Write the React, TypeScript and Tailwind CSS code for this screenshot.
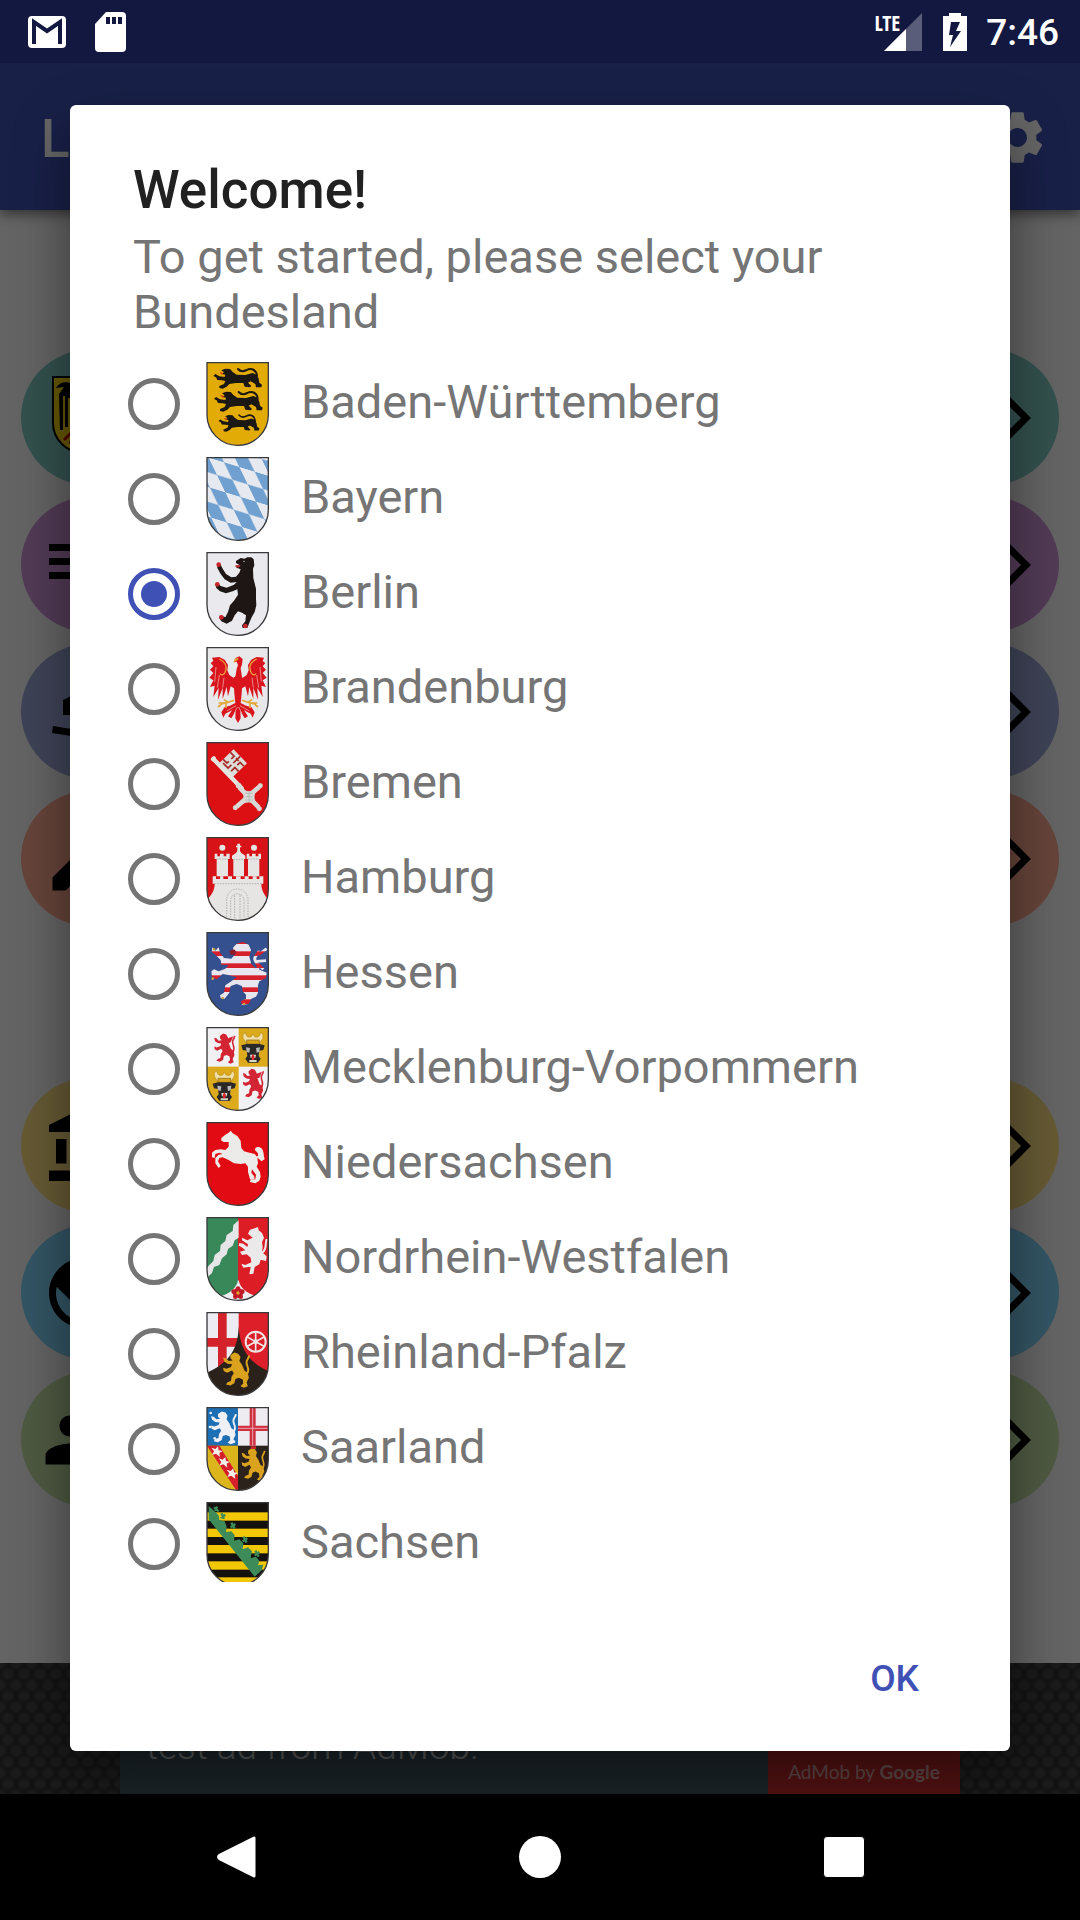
import React, { useState } from "react";
import type { ReactNode } from "react";
import { MdAccountBalance, MdEdit, MdPeople, MdPublic, MdSettings } from "react-icons/md";

const SHIELD = "M3 2H187V158A92 92 0 0 1 3 158Z";

const RAMPANT =
  "M30 12L44 2L58 6L66 18L62 32L72 46L80 66L92 74L96 92L88 108L92 122L78 128L66 122L76 112L74 98L60 92L48 96L44 112L30 120L14 116L20 108L32 104L34 88L42 76L36 66L18 74L6 68L4 56L16 60L32 54L36 44L20 42L8 34L4 20L14 22L24 32L38 30L30 22Z";
const RAMPANT_TAIL = "M88 80C104 60 84 50 88 34C90 26 96 22 97 12";

const STRIDING =
  "M46 25L58 20L72 21L80 30L92 38L118 39L140 33L152 38L158 50L160 62L168 68L166 76L150 76L148 66L134 58L126 62L136 72L132 76L116 74L112 63L90 63L70 66L62 74L50 80L40 78L40 72L54 66L58 57L48 55L34 54L30 46L22 42L28 36L40 43L56 45L58 38L48 36L54 31Z";

function Shield({ id, field, children }: { id: string; field: string; children?: ReactNode }) {
  return (
    <svg viewBox="0 0 189 252" className="h-[84px] w-[63px] shrink-0" aria-hidden="true">
      <clipPath id={id}>
        <path d={SHIELD} />
      </clipPath>
      <g clipPath={`url(#${id})`}>
        <rect width="189" height="252" fill={field} />
        {children}
      </g>
      <path d={SHIELD} fill="none" stroke="#3a3a3c" strokeWidth="4" />
    </svg>
  );
}

function Rampant({ color, place }: { color: string; place: string }) {
  return (
    <g transform={place}>
      <path d={RAMPANT} fill={color} />
      <path d={RAMPANT_TAIL} fill="none" stroke={color} strokeWidth="7" />
    </g>
  );
}

function BadenWuerttemberg() {
  return (
    <Shield id="bw" field="#e3ab05">
      {["translate(0 0)", "translate(2 69)", "translate(19 142) scale(.84)"].map((t) => (
        <g key={t} transform={t}>
          <path d={STRIDING} fill="#1b1712" />
          <path
            d="M153 42C152 24 136 16 122 24C112 29 102 28 96 21"
            fill="none"
            stroke="#1b1712"
            strokeWidth="6"
            strokeLinecap="round"
          />
          <path d="M40 31L52 33L48 38Z" fill="#d8301a" />
        </g>
      ))}
    </Shield>
  );
}

function Bayern() {
  return (
    <Shield id="by" field="#e6e9ef">
      <defs>
        <pattern
          id="by-lozenges"
          width="2"
          height="2"
          patternUnits="userSpaceOnUse"
          patternTransform="matrix(46 14 25 52 8 2)"
        >
          <rect x="1" width="1" height="1" fill="#6fa0cf" />
          <rect y="1" width="1" height="1" fill="#6fa0cf" />
        </pattern>
      </defs>
      <rect width="189" height="252" fill="url(#by-lozenges)" />
    </Shield>
  );
}

function Berlin() {
  return (
    <Shield id="be" field="#e9e9ee">
      <path
        d="M90 27L104 18L116 20L124 16L136 16L143 22L145 40L141 50L142 78L150 110L150 140L151 160L146 180L137 196L130 212L124 228L110 228L108 220L118 208L120 190L108 182L96 178L86 190L78 206L62 215L46 208L40 198L44 190L58 196L66 180L72 160L84 146L96 128L94 112L80 118L60 124L42 118L31 108L28 98L34 92L44 102L62 107L84 98L92 90L74 92L56 82L44 66L34 48L34 38L42 34L50 50L60 66L76 76L90 74L100 62L104 52L92 47L88 42L102 40L90 33Z"
        fill="#1e1614"
      />
      <g fill="#c8252b">
        <circle cx="38" cy="38" r="7" />
        <circle cx="34" cy="97" r="7" />
        <circle cx="46" cy="196" r="7" />
        <circle cx="118" cy="222" r="7" />
        <path d="M88 40L104 40L98 47L90 45Z" />
      </g>
      <circle cx="114" cy="28" r="2" fill="#e9e9ee" />
    </Shield>
  );
}

const HALF_EAGLE =
  "M96 84L82 92L70 84L64 70L66 54L56 38L40 30L18 32L22 42L14 48L22 58L12 68L22 78L10 92L22 100L12 120L26 116L22 150L38 122L36 158L50 122L50 156L62 120L66 148L74 118L84 124L86 150L88 168L72 176L56 180L46 196L52 212L58 200L78 190L66 208L76 214L89 192L88 214L96 228Z";

function Brandenburg() {
  return (
    <Shield id="bb" field="#e8e7ea">
      {["", "translate(192 0) scale(-1 1)"].map((t) => (
        <g key={t} transform={t}>
          <path d={HALF_EAGLE} fill="#d9141c" />
          <path d="M40 36C56 44 64 58 58 74C55 84 46 86 42 80" fill="none" stroke="#e9a23a" strokeWidth="4" />
          <path
            d="M84 160L66 166L54 158M66 166L48 170L36 180M60 168L60 184M54 168L38 168"
            fill="none"
            stroke="#e3a534"
            strokeWidth="5"
          />
          <path d="M30 60L26 104M40 84L34 122M54 92L50 122" stroke="#f0c3bd" strokeWidth="2" />
          <path d="M90 176L62 192M94 180L84 200" stroke="#f0c3bd" strokeWidth="2" />
        </g>
      ))}
      <path d="M84 46L88 34L100 28L110 36L108 52L104 64L108 90H88L92 66L96 54L92 44Z" fill="#d9141c" />
      <path d="M82 48L86 36L98 32L96 38L90 42Z" fill="#e3a534" />
    </Shield>
  );
}

function Bremen() {
  return (
    <Shield id="hb" field="#dc0f12">
      <g transform="translate(22 50) rotate(46)">
        <rect x="22" y="-63" width="58" height="60" fill="#dcdcd8" />
        <path
          d="M22 -50H38V-38M22 -20H38V-28M51 -63V-34M80 -50H64V-38M64 -12V-28H80M30 -12H51V-26M46 -50H58"
          fill="none"
          stroke="#a82824"
          strokeWidth="5"
        />
        <rect x="-4" y="-6" width="132" height="13" rx="3" fill="#e4e4e0" />
        <rect x="-6" y="-8" width="12" height="16" rx="5" fill="#e4e4e0" />
      </g>
      <g stroke="#d9dad7" fill="#d9dad7">
        <path d="M100 136L158 196M160 134L92 194" strokeWidth="14" />
        <path d="M108 144Q128 152 150 144Q140 164 150 186Q128 176 108 186Q118 164 108 144Z" />
        <circle cx="98" cy="131" r="8" />
        <circle cx="163" cy="131" r="7" />
        <circle cx="88" cy="197" r="7" />
        <circle cx="160" cy="200" r="7" />
      </g>
      <path d="M118 154H140M118 164H140M118 174H140M129 150V180" stroke="#aeb0ad" strokeWidth="2" />
    </Shield>
  );
}

function Hamburg() {
  return (
    <Shield id="hh" field="#d81317">
      <g fill="#e6e5e4">
        <path d="M26 50H34V58H42V50H53V58H61V50H71V66H66V118H32V66H26Z" />
        <path d="M122 50H130V58H138V50H149V58H157V50H165V66H160V118H126V66H122Z" />
        <path d="M78 56L90 48L98 36L106 48L118 56V66H114V118H82V66H78Z" />
        <path d="M94 20H102V46H94ZM90 26H106V31H90Z" />
        <circle cx="49" cy="32" r="9" />
        <circle cx="144" cy="32" r="9" />
        <path d="M20 118H30V126H42V118H52V126H66V118H78V126H90V118H104V126H116V118H128V126H140V118H152V126H160V118H172V140H166C166 162 178 178 189 190V252H0V190C14 178 26 162 26 140H20Z" />
      </g>
      <g fill="none" stroke="#b5b3b1" strokeWidth="3" strokeDasharray="5 3">
        <path d="M26 140H166M32 66H66M126 66H160M82 68H114" />
        <path d="M62 240V188A32 32 0 0 1 126 188V240" />
        <path d="M74 242V190A20 20 0 0 1 114 190V242M86 244V174M102 244V174" />
      </g>
    </Shield>
  );
}

function Hessen() {
  return (
    <Shield id="he" field="#34508f">
      <defs>
        <pattern id="he-bars" width="10" height="36" patternUnits="userSpaceOnUse">
          <rect width="10" height="36" fill="#e8e6ee" />
          <rect y="22" width="10" height="15" fill="#d6202c" />
        </pattern>
      </defs>
      <path
        d="M82 46L94 34L112 30L128 38L135 54L130 74L136 96L148 108L168 116L182 122L180 138L160 148L156 160L156 182L150 194L136 200L128 216L108 218L104 208L120 200L120 188L110 178L108 162L92 156L74 162L70 182L56 200L44 198L42 190L54 182L58 160L76 148L92 136L70 130L50 126L32 142L18 136L16 118L24 112L38 118L58 110L68 100L46 98L44 84L30 70L18 60L18 46L28 56L38 46L42 62L54 78L76 80L88 66L80 58Z"
        fill="url(#he-bars)"
      />
      <path
        d="M150 116C166 104 148 94 146 80C146 70 158 68 158 56"
        fill="none"
        stroke="url(#he-bars)"
        strokeWidth="9"
      />
      <path d="M158 68L182 50M152 88L180 86M156 96L172 112" stroke="url(#he-bars)" strokeWidth="8" />
      <path d="M70 56L84 52L92 60L82 70L72 66Z" fill="#8b1a2b" />
      <g fill="#c9a544">
        <circle cx="24" cy="52" r="4" />
        <circle cx="20" cy="140" r="4" />
        <circle cx="50" cy="198" r="4" />
        <circle cx="114" cy="216" r="4" />
      </g>
    </Shield>
  );
}

function BullHead({ place }: { place: string }) {
  return (
    <g transform={place}>
      <path
        d="M6 20C2 8 8 2 14 2C12 12 20 18 30 14L35 6L40 14C50 18 58 12 56 2C62 2 68 8 64 20L56 32H14Z"
        fill="#f0dfa8"
        stroke="#b98b18"
        strokeWidth="2"
      />
      <path d="M16 24H54V36H16Z" fill="#d8a41c" stroke="#8a6410" strokeWidth="2" />
      <path
        d="M0 40L16 36H54L70 40L66 54L54 56L52 72L58 80L50 92H20L12 80L18 72L16 56L4 54Z"
        fill="#2a2928"
      />
      <path d="M14 46L26 48L24 62L16 60ZM56 46L44 48L46 62L54 60Z" fill="#b9b9b9" />
      <path d="M26 68L44 68L42 78H28ZM24 84H46V90H24Z" fill="#dad7d2" />
      <path d="M30 74L35 66L40 74L38 84H32Z" fill="#d82a2a" />
    </g>
  );
}

function Mecklenburg() {
  return (
    <Shield id="mv" field="#f1f0f2">
      <rect x="98" width="91" height="119" fill="#dcaa1b" />
      <rect y="119" width="98" height="133" fill="#dcaa1b" />
      <Rampant color="#d32434" place="translate(22 18) scale(.66 .72)" />
      <path d="M56 20L66 34L82 28L74 46L64 50Z" fill="#d32434" />
      <Rampant color="#d32434" place="translate(108 124) scale(.66 .72)" />
      <path d="M142 126L152 140L168 134L160 152L150 156Z" fill="#d32434" />
      <BullHead place="translate(106 15)" />
      <BullHead place="translate(20 130)" />
    </Shield>
  );
}

const HORSE =
  "M46 48L58 38L68 32L74 26L80 34L94 42L104 56L106 78L114 88L130 92L146 96L154 106L156 124L152 134L162 150L164 164L160 176L148 184L132 180L134 172L148 172L150 158L138 142L136 152L144 162L146 170L132 172L126 150L126 134L118 124L104 126L84 124L68 114L50 106L40 108L36 118L44 132L38 138L28 124L28 108L38 98L50 96L40 92L28 96L26 108L18 106L18 92L28 84L44 82L58 84L68 74L68 60L54 60L46 56Z";

function Niedersachsen() {
  return (
    <Shield id="ni" field="#e30b13">
      <path d={HORSE} fill="#edebea" />
      <path
        d="M150 104C160 104 158 92 148 86C144 76 158 70 168 80C174 88 172 98 176 112L166 118L160 112Z"
        fill="#edebea"
      />
    </Shield>
  );
}

function NordrheinWestfalen() {
  return (
    <Shield id="nw" field="#39885a">
      <rect x="96" width="93" height="252" fill="#dd1d25" />
      <path
        d="M98 10L82 24L80 42L62 54L58 72L44 84L42 102L26 114L22 132L8 146L3 154V182L18 168L24 150L40 144L48 124L62 112L66 96L80 86L86 70L98 62Z"
        fill="#e6e6e8"
      />
      <path
        d="M132 38L146 34L156 30L158 40L168 48L174 62L168 76L170 90L168 106L182 118L180 132L164 128L160 142L146 150L142 170L130 172L134 150L126 150L112 152L106 140L118 144L136 136L134 122L122 112L108 114L102 104L118 100L106 90L98 86L100 78L112 80L124 90L126 82L108 70L108 62L124 70L140 62L126 50Z"
        fill="#ebe9ea"
      />
      <path d="M168 108C184 96 176 84 182 66" stroke="#ebe9ea" strokeWidth="6" fill="none" />
      <path d="M96 190C92 212 74 228 44 238L96 256L152 238C120 228 102 212 98 190Z" fill="#ececee" />
      <g fill="#c01a28">
        <circle cx="96" cy="228" r="15" />
        <circle cx="96" cy="215" r="7" />
        <circle cx="83" cy="224" r="7" />
        <circle cx="109" cy="224" r="7" />
        <circle cx="88" cy="239" r="7" />
        <circle cx="104" cy="239" r="7" />
      </g>
      <circle cx="96" cy="228" r="5" fill="#e0a72c" />
    </Shield>
  );
}

function RheinlandPfalz() {
  return (
    <Shield id="rp" field="#dc1f29">
      <rect width="98" height="252" fill="#ececf2" />
      <path d="M36 0H62V180H36ZM0 78H98V104H0Z" fill="#d4222b" />
      <g stroke="#f0e6e6" fill="none">
        <circle cx="149" cy="89" r="30" strokeWidth="6" />
        <path d="M149 60V118M124 75L174 103M124 103L174 75" strokeWidth="5" />
      </g>
      <circle cx="149" cy="89" r="7" fill="#f0e6e6" />
      <path d="M98 44C96 120 60 156 3 182V252H189V178C138 156 102 120 98 44Z" fill="#2b211b" />
      <Rampant color="#dba21d" place="translate(48 120) scale(.84 .84)" />
    </Shield>
  );
}

function Saarland() {
  return (
    <Shield id="sl" field="#2a221b">
      <rect width="96" height="116" fill="#1d6fb5" />
      <rect x="96" width="93" height="116" fill="#eeecf1" />
      <path d="M131 0H149V116H131ZM96 56H189V72H96Z" fill="#cf3040" />
      <path d="M140 0V116M96 64H189" stroke="#e9a5ad" strokeWidth="3" />
      <rect y="116" width="96" height="136" fill="#dcb51c" />
      <path d="M3 116H40L96 206V252L88 246Z" fill="#d51f2b" />
      <g fill="#f1efe9">
        {["translate(16 118)", "translate(38 150)", "translate(62 184)"].map((t) => (
          <path key={t} transform={t} d="M0 4L12 8L20 0L22 12L34 14L24 20L26 32L14 22L2 26L8 15Z" />
        ))}
      </g>
      <g fill="#e8eef6">
        <circle cx="14" cy="18" r="4" />
        <circle cx="26" cy="94" r="4" />
        <circle cx="84" cy="104" r="4" />
        <circle cx="12" cy="60" r="4" />
      </g>
      <Rampant color="#eef0f5" place="translate(12 12) scale(.8 .78)" />
      <Rampant color="#dba21d" place="translate(104 122) scale(.74 .78)" />
      <path d="M134 118H150V126H134Z" fill="#c8252b" />
    </Shield>
  );
}

function Sachsen() {
  return (
    <Shield id="sn" field="#15110f">
      {[31, 80, 129, 178, 226].map((y) => (
        <rect key={y} y={y} width="189" height="25" fill="#f2c706" />
      ))}
      <path
        d="M8 12L24 26L38 40L40 54L56 58L62 74L60 90L76 88L86 100L84 116L100 112L112 124L110 142L126 136L138 148L134 168L150 164L160 176L156 190L172 188L166 206L146 224L8 52Z"
        fill="#3c8b59"
      />
      <path
        d="M26 26L34 14M24 16L38 28M44 48L58 38M46 34L54 50M74 76L88 66M76 62L86 80M110 118L124 108M112 104L122 122M146 160L160 150M148 146L158 164"
        stroke="#3c8b59"
        strokeWidth="7"
      />
    </Shield>
  );
}

const STATES: { name: string; arms: () => ReactNode }[] = [
  { name: "Baden-Württemberg", arms: BadenWuerttemberg },
  { name: "Bayern", arms: Bayern },
  { name: "Berlin", arms: Berlin },
  { name: "Brandenburg", arms: Brandenburg },
  { name: "Bremen", arms: Bremen },
  { name: "Hamburg", arms: Hamburg },
  { name: "Hessen", arms: Hessen },
  { name: "Mecklenburg-Vorpommern", arms: Mecklenburg },
  { name: "Niedersachsen", arms: Niedersachsen },
  { name: "Nordrhein-Westfalen", arms: NordrheinWestfalen },
  { name: "Rheinland-Pfalz", arms: RheinlandPfalz },
  { name: "Saarland", arms: Saarland },
  { name: "Sachsen", arms: Sachsen },
];

function FederalArms() {
  return (
    <svg viewBox="0 0 84 84" className="size-[84px]" aria-hidden="true">
      <path d="M11 1H73V47A31 30 0 0 1 11 47Z" fill="#ffdc00" stroke="#000" strokeWidth="2" />
      <path d="M38 14C30 4 18 4 14 12L22 11L17 18L18 54H21V20H23V51H26V22H28V48H31V22H34V44H50V22H53V48H56V22H58V51H61V20H63V54H66L67 18L62 11L70 12C66 4 54 4 46 14Z" />
      <path d="M22 64L34 52L28 68M62 64L50 52L56 68" stroke="#c00" strokeWidth="3" fill="none" />
    </svg>
  );
}

function ListIcon() {
  return (
    <svg viewBox="0 0 24 24" className="size-[84px]" aria-hidden="true">
      <path d="M14 10H2v2h12v-2zM14 6H2v2h12V6zM2 16h8v-2H2v2z" />
    </svg>
  );
}

function Desk() {
  return (
    <svg viewBox="0 0 84 84" className="size-[84px]" aria-hidden="true">
      <path d="M21 30L42 20L63 30V45H21Z" />
      <path d="M11 56L42 61L73 56V63L42 68L10 63Z" />
    </svg>
  );
}

function MenuPill({ tone, icon, label }: { tone: string; icon: ReactNode; label: string }) {
  return (
    <button
      type="button"
      aria-label={label}
      className={`flex h-[135px] w-full items-center justify-between rounded-full px-[21px] text-black ${tone}`}
    >
      {icon}
      <svg viewBox="0 0 49 84" className="h-[84px] w-[49px]" fill="none" stroke="#000" strokeWidth="7" aria-hidden="true">
        <path d="M9 14L37 42L9 70" />
      </svg>
    </button>
  );
}

function StatusBar() {
  return (
    <header className="relative z-10 flex h-[63px] shrink-0 items-center justify-between bg-[#131840] pr-[21px] pl-[28px] text-white">
      <div className="flex items-center gap-[29px]">
        <svg viewBox="0 0 38 32" className="h-8 w-[38px]" role="img" aria-label="Gmail">
          <rect width="38" height="32" rx="4" fill="#fff" />
          <path d="M6 28V6L19 15L32 6V28" fill="none" stroke="#131840" strokeWidth="4" />
        </svg>
        <svg viewBox="0 0 31 40" className="h-10 w-[31px]" role="img" aria-label="SD card">
          <path d="M11 0H27A4 4 0 0 1 31 4V36A4 4 0 0 1 27 40H4A4 4 0 0 1 0 36V12Z" fill="#fff" />
          <path d="M11 5H15V12H11ZM17 5H21V12H17ZM23 5H27V12H23Z" fill="#131840" />
        </svg>
      </div>
      <div className="flex items-center">
        <div className="flex items-start">
          <span className="-mr-4 text-[21px] leading-[20px] font-bold [font-family:'Open_Sans_Condensed','Liberation_Sans_Narrow',Roboto,sans-serif]">
            LTE
          </span>
          <svg viewBox="0 0 38 38" className="h-[38px] w-[38px]" role="img" aria-label="Mobile signal">
            <path d="M38 0V38H0Z" fill="#fff" fillOpacity=".3" />
            <path d="M22 16V38H0Z" fill="#fff" />
          </svg>
        </div>
        <svg viewBox="0 0 24 38" className="ml-[21px] h-[38px] w-6" role="img" aria-label="Battery charging">
          <path d="M6 0H18V3H24V38H0V3H6Z" fill="#fff" />
          <path d="M8 9H17L13 18H18L7 34L10 22H6Z" fill="#131840" />
        </svg>
        <time className="ml-[19px] pt-[3px] text-[37px] leading-[44px] font-medium">7:46</time>
      </div>
    </header>
  );
}

export default function App() {
  const [selected, setSelected] = useState("Berlin");
  return (
    <div className="flex min-h-screen flex-col bg-black [font-family:Roboto,'Noto_Sans',sans-serif]">
      <div className="relative flex flex-1 flex-col bg-[#fafafa]">
        <StatusBar />
        <div className="flex h-[147px] shrink-0 items-center justify-between bg-[#3f51b5] pt-[2px] pr-[31px] pl-[41px] shadow-[0_4px_12px_rgba(0,0,0,0.5)]">
          <h1 className="pt-[2px] text-[53px] leading-[62px] font-medium text-white">L</h1>
          <MdSettings className="size-[63px] text-white" />
        </div>
        <main className="flex flex-1 flex-col px-[21px] pt-[140px]">
          <nav className="flex flex-col gap-3">
            <MenuPill label="Germany" tone="bg-[#80cbc4]" icon={<FederalArms />} />
            <MenuPill label="Catalogue" tone="bg-[#ce93d8]" icon={<ListIcon />} />
            <MenuPill label="Practice" tone="bg-[#9fa8da]" icon={<Desk />} />
            <MenuPill label="Test" tone="bg-[#ffab91]" icon={<MdEdit className="size-[84px]" />} />
          </nav>
          <nav className="mt-[152px] flex flex-col gap-3">
            <MenuPill label="Politics" tone="bg-[#ffe082]" icon={<MdAccountBalance className="size-[84px]" />} />
            <MenuPill label="World" tone="bg-[#81d4fa]" icon={<MdPublic className="size-[84px]" />} />
            <MenuPill label="People" tone="bg-[#c5e1a5]" icon={<MdPeople className="size-[84px]" />} />
          </nav>
        </main>
        <aside className="flex h-[131px] shrink-0 justify-center bg-[#303030] bg-[radial-gradient(circle,#454545_25%,transparent_55%),radial-gradient(circle,#454545_25%,transparent_55%)] bg-[size:16px_22px] bg-[position:0_0,8px_11px]">
          <div className="flex w-[840px] bg-[#455a64]">
            <p className="flex flex-1 items-end pb-[25px] pl-[26px] text-[37px] leading-[44px] font-light text-[#e0e0e0]">
              test ad from AdMob.
            </p>
            <p className="flex w-[192px] items-end justify-center bg-[#d32f2f] pb-[10px] text-[19px] leading-6 text-[#e8b4b4] [font-family:Lato,sans-serif]">
              <span>
                AdMob by <b>Google</b>
              </span>
            </p>
          </div>
        </aside>

        <div className="absolute inset-0 flex bg-black/60 px-[70px] pt-[105px] pb-[43px]">
          <section
            role="dialog"
            aria-labelledby="welcome"
            className="flex flex-1 flex-col rounded-[6px] bg-white shadow-[0_24px_56px_rgba(0,0,0,0.45)]"
          >
            <h2 id="welcome" className="px-[63px] pt-[54px] text-[53px] leading-[62px] font-medium text-[#212121]">
              Welcome!
            </h2>
            <p className="px-[63px] pt-2 text-[47px] leading-[55px] text-[#757575]">
              To get started, please select your Bundesland
            </p>
            <div className="mt-[23px] h-0 min-h-0 flex-1 overflow-hidden pl-[58px]">
              <div role="radiogroup" aria-labelledby="welcome" className="flex flex-col gap-[11px]">
                {STATES.map(({ name, arms: Arms }) => (
                  <label key={name} className="flex h-[84px] items-center text-[47px] leading-[55px] text-[#757575]">
                    <input
                      type="radio"
                      name="bundesland"
                      value={name}
                      checked={selected === name}
                      onChange={() => setSelected(name)}
                      className="mr-[26px] size-[52px] shrink-0 appearance-none rounded-full border-5 border-[#757575] bg-white bg-clip-content p-2 checked:border-[#3f51b5] checked:bg-[#3f51b5]"
                    />
                    <Arms />
                    <span className="pb-[6px] pl-8">{name}</span>
                  </label>
                ))}
              </div>
            </div>
            <div className="flex justify-end px-[63px] pt-[62px] pb-[37px]">
              <button type="button" className="h-[70px] px-7 text-[37px] leading-[44px] font-medium text-[#3f51b5]">
                OK
              </button>
            </div>
          </section>
        </div>
      </div>

      <nav className="flex h-[126px] shrink-0 items-center justify-center gap-[262px] bg-black">
        <button type="button" aria-label="Back">
          <svg viewBox="-2 0 42 42" className="size-[42px]" aria-hidden="true">
            <path d="M37 2V40L3 23Q0 21 3 19Z" fill="#fff" stroke="#fff" strokeWidth="3" strokeLinejoin="round" />
          </svg>
        </button>
        <button type="button" aria-label="Home" className="size-[42px] rounded-full bg-white" />
        <button type="button" aria-label="Recent apps" className="size-[42px] rounded-[4px] border border-black bg-white" />
      </nav>
    </div>
  );
}
